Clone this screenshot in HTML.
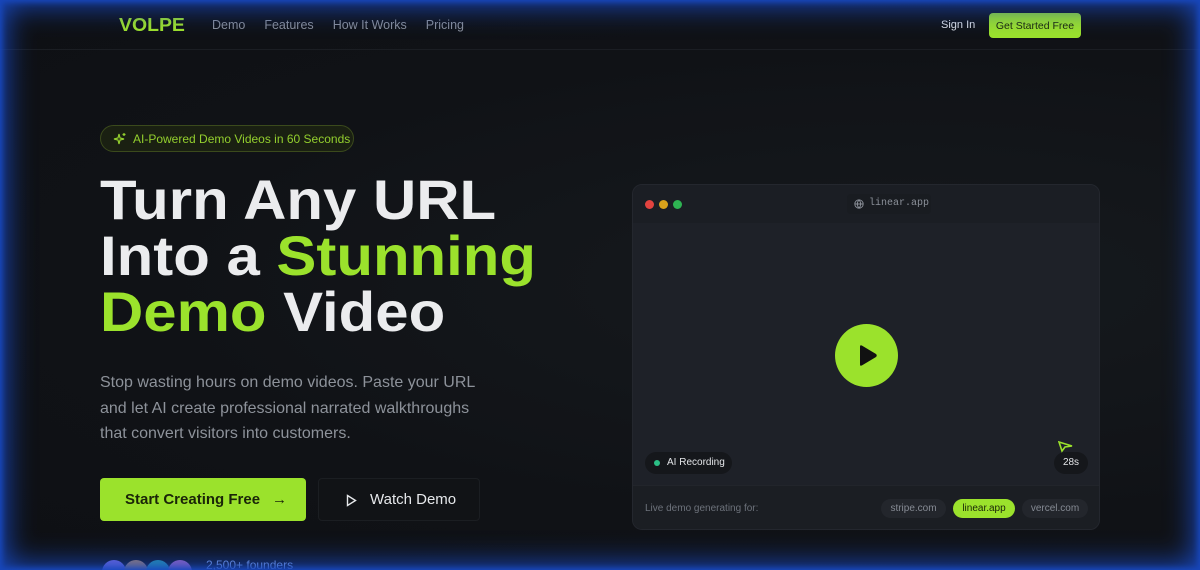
<!DOCTYPE html>
<html><head><meta charset="utf-8"><style>
*{margin:0;padding:0;box-sizing:border-box}
html,body{width:1200px;height:570px;overflow:hidden;background:#0f1115;font-family:"Liberation Sans",sans-serif}
.page{position:relative;width:1200px;height:570px;background:radial-gradient(ellipse at 75% 50%,#161a1e 0%,#101216 60%,#0e1014 100%)}
.glow{position:absolute;inset:0;pointer-events:none;box-shadow:inset 0 0 28px 6px #1846b8, inset 0 0 6px 2px #1a4fd0;z-index:10}
.nav{position:absolute;top:0;left:0;right:0;height:50px;border-bottom:1px solid #1b1e23}
.logo{position:absolute;left:119px;top:15px;color:#9fe22a;font-weight:bold;font-size:18px;letter-spacing:0;transform:scaleX(1.08);transform-origin:left}
.links{position:absolute;left:212px;top:18px;font-size:12.5px;color:#8a8f99}
.links span{margin-right:19px}
.signin{position:absolute;left:941px;top:19px;color:#dfe2e8;font-size:11px}
.gs{position:absolute;left:989px;top:13px;width:92px;height:25px;border-radius:4px;background:#9be22c;color:#1a2508;font-size:10.5px;display:flex;align-items:center;justify-content:center}
.badge{position:absolute;left:100px;top:125px;width:254px;height:27px;border:1px solid #3b4a1c;background:#1a2012;border-radius:14px;color:#93cf2e;font-size:12px;display:flex;align-items:center;padding-left:32px}
.badge svg{position:absolute;left:12px;top:6px}
h1{position:absolute;left:100px;top:172px;font-size:56px;line-height:56px;color:#ebecee;font-weight:bold;letter-spacing:0;white-space:nowrap}
h1 .l{display:block;transform:scaleX(1.07);transform-origin:left}
.g{color:#9be22c}
.p{position:absolute;left:100px;top:370px;width:392px;font-size:16px;line-height:25.5px;color:#8d929a}
.b1{position:absolute;left:100px;top:478px;width:206px;height:43px;background:#9be22c;border-radius:4px;color:#1a2508;font-weight:bold;font-size:15px;display:flex;align-items:center;padding-left:25px}
.b2{position:absolute;left:318px;top:478px;width:162px;height:43px;background:#111316;border:1px solid #1b1e22;border-radius:4px;color:#e6e8eb;font-size:15px;display:flex;align-items:center;padding-left:51px}
.av{position:absolute;top:560px;width:24px;height:24px;border-radius:50%}
.fd{position:absolute;left:206px;top:558px;color:#8fb0f0;font-size:12px}
.win{position:absolute;left:632px;top:184px;width:468px;height:346px;border-radius:10px;background:#1e2128;border:1px solid #24272e;overflow:hidden}
.bar{height:38px;background:#1b1e24;position:relative}
.dot{position:absolute;top:15px;width:9px;height:9px;border-radius:50%}
.url{position:absolute;left:214px;top:9px;width:84px;height:20px;background:#191c21;border-radius:4px;font-family:"Liberation Mono",monospace;font-size:10px;color:#8b9099;padding-left:22px;line-height:20px}
.play{position:absolute;left:202px;top:139px;width:63px;height:63px;border-radius:50%;background:#9be22c}
.rec{position:absolute;left:12px;top:267px;width:87px;height:22px;border-radius:11px;background:#15171b;color:#e3e5e8;font-size:10px;line-height:22px;padding-left:22px}
.rec:before{content:"";position:absolute;left:9px;top:8px;width:6px;height:6px;border-radius:50%;background:#2bbf86}
.sec{position:absolute;left:421px;top:267px;width:34px;height:22px;border-radius:11px;background:#15171b;color:#e3e5e8;font-size:10px;line-height:22px;text-align:center}
.foot{position:absolute;left:0;right:0;bottom:0;height:44px;background:#1b1e23;border-top:1px solid #22252b}
.foot .t{position:absolute;left:12px;top:17px;color:#6d727b;font-size:10px}
.chip{position:absolute;top:13px;height:19px;border-radius:10px;background:#23262c;color:#868b94;font-size:10px;line-height:19px;text-align:center}
</style></head><body><div class="page">
<div class="nav">
<div class="logo">VOLPE</div>
<div class="links"><span>Demo</span><span>Features</span><span>How It Works</span><span>Pricing</span></div>
<div class="signin">Sign In</div>
<div class="gs">Get Started Free</div>
</div>
<div class="badge"><svg width="14" height="14" viewBox="0 0 14 14" fill="none" stroke="#93cf2e" stroke-width="1.2"><path d="M6 2 L7 6 L11 7 L7 8 L6 12 L5 8 L1 7 L5 6 Z"/><path d="M11 1v3M9.5 2.5h3"/></svg>AI-Powered Demo Videos in 60 Seconds</div>
<h1><span class="l">Turn Any URL</span><span class="l">Into a <span class="g">Stunning</span></span><span class="l"><span class="g">Demo</span> Video</span></h1>
<div class="p">Stop wasting hours on demo videos. Paste your URL and let AI create professional narrated walkthroughs that convert visitors into customers.</div>
<div class="b1">Start Creating Free <span style="margin-left:12px;font-weight:normal">→</span></div>
<div class="b2"><svg style="position:absolute;left:27px;top:15px" width="11" height="13" viewBox="0 0 11 13" fill="none" stroke="#e6e8eb" stroke-width="1.4"><path d="M1.5 1.5 L9.5 6.5 L1.5 11.5 Z"/></svg>Watch Demo</div>
<div class="av" style="left:102px;background:#7b6ee8"></div>
<div class="av" style="left:124px;background:#b28a6c"></div>
<div class="av" style="left:146px;background:#2aa0b0"></div>
<div class="av" style="left:168px;background:#b26cc8"></div>
<div class="fd">2,500+ founders</div>
<div class="win">
<div class="bar">
<div class="dot" style="left:12px;background:#e2433f"></div>
<div class="dot" style="left:26px;background:#d9a21b"></div>
<div class="dot" style="left:40px;background:#2eb352"></div>
<div class="url"><svg style="position:absolute;left:7px;top:5px" width="10" height="10" viewBox="0 0 10 10" fill="none" stroke="#8b9099" stroke-width="0.9"><circle cx="5" cy="5" r="4.2"/><path d="M0.8 5h8.4M5 0.8c-2.2 2.5-2.2 5.9 0 8.4M5 0.8c2.2 2.5 2.2 5.9 0 8.4"/></svg>linear.app</div>
</div>
<div class="play"><svg style="position:absolute;left:23px;top:20px" width="20" height="23" viewBox="0 0 20 23"><path d="M2 2.5 Q2 0.5 4 1.6 L18 10 Q19.5 11.5 18 13 L4 21.4 Q2 22.5 2 20.5 Z" fill="#111"/></svg></div>
<svg style="position:absolute;left:425px;top:256px" width="16" height="12" viewBox="0 0 16 12" fill="none" stroke="#9be22c" stroke-width="1.6"><path d="M1 1 L14 5 L7 6 L4 10 Z"/></svg>
<div class="rec">AI Recording</div>
<div class="sec">28s</div>
<div class="foot"><span class="t">Live demo generating for:</span>
<div class="chip" style="left:248px;width:65px">stripe.com</div>
<div class="chip" style="left:320px;width:62px;background:#9be22c;color:#1a2508">linear.app</div>
<div class="chip" style="left:389px;width:66px">vercel.com</div>
</div>
</div>
<div class="glow"></div>
</div></body></html>
